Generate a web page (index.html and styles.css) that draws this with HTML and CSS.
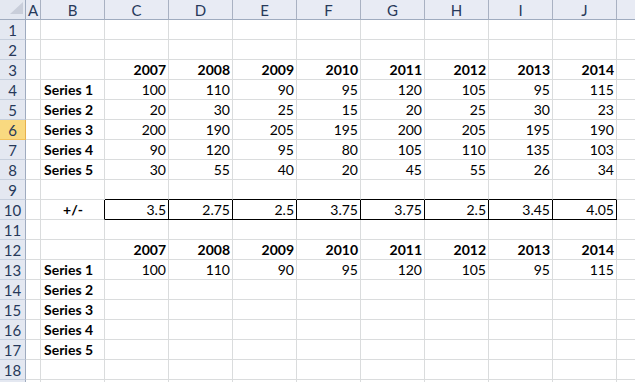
FILE: index.html
```html
<!DOCTYPE html>
<html lang="en">
<head>
    <meta charset="UTF-8">
    <meta name="viewport" content="width=device-width, initial-scale=1.0">
    <title>Series</title>
    <link rel="stylesheet" href="styles.css">
</head>
<body>

    <div class="sheet" id="sheet"></div>

    <script>
        const letters = ['A', 'B', 'C', 'D', 'E', 'F', 'G', 'H', 'I', 'J', ''];
        const years = ['2007', '2008', '2009', '2010', '2011', '2012', '2013', '2014'];

        // isi per baris: kolom A..J
        const rows = {
            3: ['', '', ...years],
            4: ['', 'Series 1', 100, 110, 90, 95, 120, 105, 95, 115],
            5: ['', 'Series 2', 20, 30, 25, 15, 20, 25, 30, 23],
            6: ['', 'Series 3', 200, 190, 205, 195, 200, 205, 195, 190],
            7: ['', 'Series 4', 90, 120, 95, 80, 105, 110, 135, 103],
            8: ['', 'Series 5', 30, 55, 40, 20, 45, 55, 26, 34],
            10: ['', '+/-', 3.5, 2.75, 2.5, 3.75, 3.75, 2.5, 3.45, 4.05],
            12: ['', '', ...years],
            13: ['', 'Series 1', 100, 110, 90, 95, 120, 105, 95, 115],
            14: ['', 'Series 2'],
            15: ['', 'Series 3'],
            16: ['', 'Series 4'],
            17: ['', 'Series 5']
        };

        const sheet = document.getElementById('sheet');

        function addCell(text, className) {
            const cell = document.createElement('div');
            cell.className = className;
            cell.textContent = text;
            sheet.appendChild(cell);
        }

        // baris judul kolom
        const corner = document.createElement('div');
        corner.className = 'corner';
        corner.innerHTML = '<svg width="14" height="13" viewBox="0 0 14 13"><polygon points="13,0 13,12 0,12" fill="#c9ceda"/></svg>';
        sheet.appendChild(corner);
        letters.forEach(l => addCell(l, 'col-head'));

        // baris 19 hanya terlihat 2px, jadi nomornya tidak ditulis
        for (let r = 1; r <= 19; r++) {
            addCell(r < 19 ? r : '', r === 6 ? 'row-head active' : 'row-head');
            const values = rows[r] || [];
            for (let c = 0; c < letters.length; c++) {
                const value = values[c] === undefined ? '' : String(values[c]);
                let cls = 'cell';
                if (c === 1) cls += r === 10 ? ' label center' : ' label';
                if (c >= 2 && c <= 9) {
                    cls += ' num';
                    if (r === 3 || r === 12) cls += ' bold';
                    if (r === 9) cls += ' line-bottom';
                    if (r === 10) cls += ' line-bottom line-right';
                }
                if (c === 1 && r === 10) cls += ' line-right';
                addCell(value, cls);
            }
        }
    </script>

</body>
</html>
```

FILE: styles.css
```css
body {
    margin: 0;
    overflow: hidden;
    background: #fff;
    font-family: Lato, "Liberation Sans", sans-serif;
    font-size: 14px;
    color: #000;
}

.sheet {
    display: grid;
    grid-template-columns: 26px 15px repeat(9, 64px) 64px;
    grid-auto-rows: 20px;
    width: 635px;
    height: 382px;
    overflow: hidden;
}

.sheet > div {
    box-sizing: border-box;
    line-height: 20px;
    white-space: nowrap;
    overflow: hidden;
}

.corner {
    background: #e4e8f1;
    border-right: 1px solid #9fabbf;
    border-bottom: 1px solid #9fabbf;
    display: flex;
    align-items: flex-end;
    justify-content: flex-end;
    padding: 0 1px 4px 0;
}

.col-head {
    background: #e8ebf4;
    border-right: 1px solid #a9b1c2;
    border-bottom: 1px solid #9fabbf;
    color: #27395a;
    text-align: center;
    font-size: 15px;
}

.row-head {
    background: #e4e8f1;
    border-right: 1px solid #9fabbf;
    border-bottom: 1px solid #c6cfdd;
    color: #27395a;
    text-align: center;
    font-size: 15px;
}

.row-head.active {
    background: #f9d980;
    border-bottom-color: #f2c15c;
    border-right-color: #e6b04e;
}

.cell {
    border-right: 1px solid #dadcdd;
    border-bottom: 1px solid #dadcdd;
    padding: 0 2px 0 3px;
}

.label {
    font-weight: bold;
}

.center {
    text-align: center;
}

.num {
    text-align: right;
}

.bold {
    font-weight: bold;
}

.line-bottom {
    border-bottom-color: #000;
}

.line-right {
    border-right-color: #000;
}
```
